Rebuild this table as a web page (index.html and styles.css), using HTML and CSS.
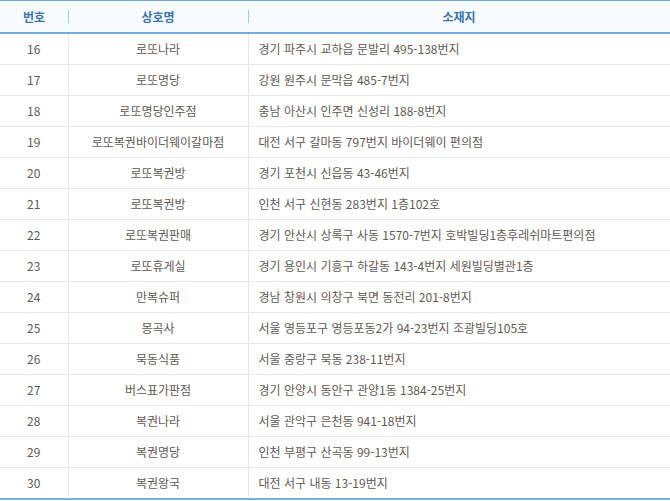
FILE: index.html
```html
<!DOCTYPE html>
<html lang="ko">
<head>
<meta charset="utf-8">
<link rel="stylesheet" href="styles.css">
</head>
<body>
<table class="list">
  <colgroup>
    <col class="c-no">
    <col class="c-name">
    <col class="c-addr">
  </colgroup>
  <thead>
    <tr>
      <th><span class="sep">번호</span></th>
      <th><span class="sep">상호명</span></th>
      <th><span>소재지</span></th>
    </tr>
  </thead>
  <tbody>
    <tr><td>16</td><td>로또나라</td><td class="addr">경기 파주시 교하읍 문발리 495-138번지</td></tr>
    <tr><td>17</td><td>로또명당</td><td class="addr">강원 원주시 문막읍 485-7번지</td></tr>
    <tr><td>18</td><td>로또명당인주점</td><td class="addr">충남 아산시 인주면 신성리 188-8번지</td></tr>
    <tr><td>19</td><td>로또복권바이더웨이갈마점</td><td class="addr">대전 서구 갈마동 797번지 바이더웨이 편의점</td></tr>
    <tr><td>20</td><td>로또복권방</td><td class="addr">경기 포천시 신읍동 43-46번지</td></tr>
    <tr><td>21</td><td>로또복권방</td><td class="addr">인천 서구 신현동 283번지 1층102호</td></tr>
    <tr><td>22</td><td>로또복권판매</td><td class="addr">경기 안산시 상록구 사동 1570-7번지 호박빌딩1층후레쉬마트편의점</td></tr>
    <tr><td>23</td><td>로또휴게실</td><td class="addr">경기 용인시 기흥구 하갈동 143-4번지 세원빌딩별관1층</td></tr>
    <tr><td>24</td><td>만복슈퍼</td><td class="addr">경남 창원시 의창구 북면 동전리 201-8번지</td></tr>
    <tr><td>25</td><td>몽곡사</td><td class="addr">서울 영등포구 영등포동2가 94-23번지 조광빌딩105호</td></tr>
    <tr><td>26</td><td>묵동식품</td><td class="addr">서울 중랑구 묵동 238-11번지</td></tr>
    <tr><td>27</td><td>버스표가판점</td><td class="addr">경기 안양시 동안구 관양1동 1384-25번지</td></tr>
    <tr><td>28</td><td>복권나라</td><td class="addr">서울 관악구 은천동 941-18번지</td></tr>
    <tr><td>29</td><td>복권명당</td><td class="addr">인천 부평구 산곡동 99-13번지</td></tr>
    <tr><td>30</td><td>복권왕국</td><td class="addr">대전 서구 내동 13-19번지</td></tr>
  </tbody>
</table>
</body>
</html>
```

FILE: styles.css
```css
html, body {
  margin: 0;
  padding: 0;
  background: #ffffff;
}

body {
  font-family: "Noto Sans CJK KR", "Noto Sans", sans-serif;
  font-size: 12px;
  color: #5f5a55;
}

.list {
  width: 670px;
  border-collapse: collapse;
  table-layout: fixed;
  border-top: 1px solid #6fa8de;
  border-bottom: 2px solid #7eaedb;
}

.c-no { width: 68px; }
.c-name { width: 180px; }
.c-addr { width: 422px; }

.list thead th {
  height: 31px;
  padding: 0;
  background: #f6fbfd;
  border-bottom: 2px solid #72aadf;
  color: #3a72ad;
  font-weight: bold;
  font-size: 12px;
  text-align: center;
  line-height: 14px;
  position: relative;
}

.list thead th .sep {
  display: block;
}

.list thead th + th::before {
  content: "";
  position: absolute;
  left: 0;
  top: 9px;
  width: 1px;
  height: 13px;
  background: #9cc7ee;
}

.list tbody td {
  height: 30px;
  padding: 0;
  text-align: center;
  border-bottom: 1px solid #e8e8e8;
  border-left: 1px solid #e8e8e8;
  line-height: 14px;
  white-space: nowrap;
}

.list tbody td:first-child {
  border-left: none;
}

.list tbody tr:last-child td {
  border-bottom: none;
}

.list tbody td.addr {
  text-align: left;
  padding-left: 10px;
}
```
